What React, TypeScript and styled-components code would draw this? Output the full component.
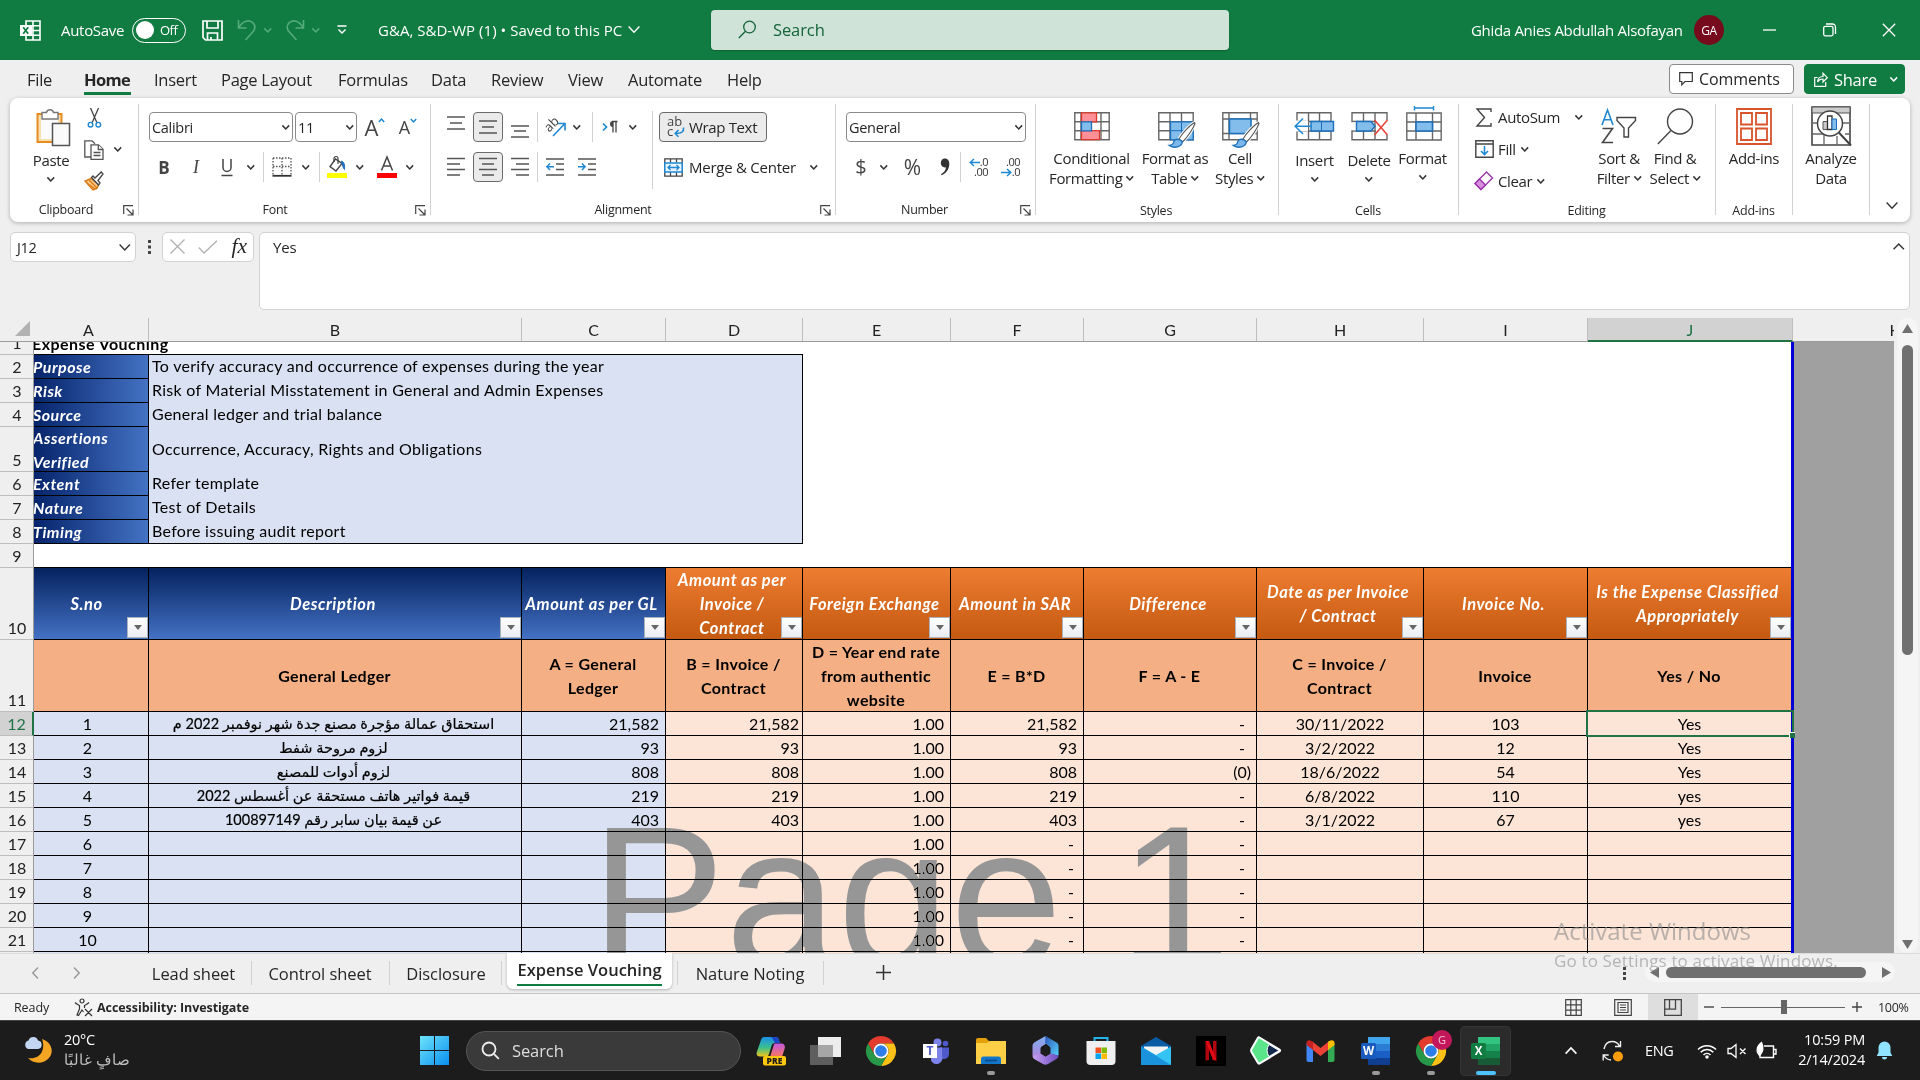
import React from "react";
import styled, { createGlobalStyle, css } from "styled-components";

const UI = `"Open Sans", "Noto Sans", sans-serif`;
const CELL = `Lato, "Noto Sans", "DejaVu Sans", sans-serif`;

const Global = createGlobalStyle`
  *, *::before, *::after { box-sizing: border-box; }
  html, body { margin: 0; padding: 0; background: #efefef; }
  body { width: 1920px; height: 1080px; overflow: hidden; font-family: ${UI}; color: #262626; }
  svg { display: block; flex: none; overflow: visible; }
`;

const Screen = styled.div`
  position: relative;
  display: flex;
  flex-direction: column;
  width: 1920px;
  height: 1080px;
  overflow: hidden;
  background: #efefef;
`;

/* ---------- shared pieces ---------- */

type SlotProps = { $w?: number; $ml?: number; $h?: number; $push?: boolean };

const Slot = styled.div<SlotProps>`
  flex: none;
  display: flex;
  align-items: center;
  justify-content: center;
  width: ${(p) => (p.$w ? `${p.$w}px` : "auto")};
  height: ${(p) => (p.$h ? `${p.$h}px` : "auto")};
  margin-left: ${(p) => (p.$push ? "auto" : `${p.$ml ?? 0}px`)};
  white-space: nowrap;
`;

const Text = styled.span<{ $w?: number; $ml?: number; $size?: number; $ls?: number; $bold?: boolean }>`
  flex: none;
  width: ${(p) => (p.$w ? `${p.$w}px` : "auto")};
  margin-left: ${(p) => p.$ml ?? 0}px;
  font-size: ${(p) => p.$size ?? 15}px;
  letter-spacing: ${(p) => p.$ls ?? -0.35}px;
  font-weight: ${(p) => (p.$bold ? 700 : 400)};
  white-space: nowrap;
`;

const Chevron = ({ size = 7.5, color = "#333", weight = 1.5, up = false }: { size?: number; color?: string; weight?: number; up?: boolean }) => (
  <svg width={size} height={size * 0.6} viewBox="0 0 10 6">
    <path d={up ? "M.5 5.5 5 .8l4.5 4.7" : "M.5.5 5 5.2 9.5.5"} fill="none" stroke={color} strokeWidth={weight * (10 / size)} />
  </svg>
);

const Drop = ({ ml = 0, color }: { ml?: number; color?: string }) => (
  <Slot $w={10} $ml={ml}>
    <Chevron color={color} />
  </Slot>
);

/* ---------- title bar ---------- */

const TitleBar = styled.header`
  flex: none;
  display: flex;
  align-items: center;
  height: 60px;
  background: #107c41;
  color: #fff;
`;

const Toggle = styled.div`
  flex: none;
  display: flex;
  align-items: center;
  gap: 6px;
  width: 54px;
  height: 25px;
  margin-left: 8px;
  padding-left: 3px;
  border: 1px solid #fff;
  border-radius: 13px;
  font-size: 13px;
  letter-spacing: -0.5px;
`;

const Knob = styled.i`
  width: 18px;
  height: 18px;
  border-radius: 50%;
  background: #fff;
`;

const TitleSearch = styled.div`
  flex: none;
  display: flex;
  align-items: center;
  width: 518px;
  height: 40px;
  margin-left: 71px;
  padding: 0 0 2px 27px;
  border-radius: 4px;
  background: #cfe3d8;
  color: #14633a;
  box-shadow: 0 1px 2px rgba(0, 0, 0, 0.2);
`;

const Avatar = styled.div`
  flex: none;
  display: flex;
  align-items: center;
  justify-content: center;
  width: 30px;
  height: 30px;
  margin-left: 11px;
  border-radius: 50%;
  background: #750b1c;
  font-size: 12px;
  letter-spacing: -0.3px;
`;

const ExcelMark = () => (
  <svg width="21" height="21" viewBox="0 0 21 21">
    <path d="M6 1h14v19H6z" fill="none" stroke="#fff" strokeWidth="1.6" />
    <path d="M13 1v19M6 5.7h14M6 10.5h14M6 15.2h14" stroke="#fff" strokeWidth="1.6" />
    <path d="M0 5h12v11H0z" fill="#fff" />
    <path d="M3.2 7.2l5 6.6M8.2 7.2l-5 6.6" stroke="#107c41" strokeWidth="1.8" />
  </svg>
);

const TitleArea = () => (
  <TitleBar>
    <Slot $ml={20}><ExcelMark /></Slot>
    <Text $ml={20} $w={63} $size={15} $ls={-0.3}>AutoSave</Text>
    <Toggle><Knob />Off</Toggle>
    <Slot $ml={16}>
      <svg width="21" height="21" viewBox="0 0 21 21" fill="none" stroke="#fff" strokeWidth="1.7">
        <path d="M1 1h16l3 0v19H3.5L1 17.5z" />
        <path d="M5 1v7h11V1M5.5 20v-7h10v7M9 17v3" />
      </svg>
    </Slot>
    <Slot $ml={14}>
      <svg width="20" height="22" viewBox="0 0 20 22" fill="none" stroke="#55ab7c" strokeWidth="1.6">
        <path d="M1.5 1v8h8M2 8.500C6 1 12 .8 15.500 3.300c3.500 3 3 7-.5 10.500L8.500 21" />
      </svg>
    </Slot>
    <Drop ml={6} color="#55ab7c" />
    <Slot $ml={12}>
      <svg width="20" height="22" viewBox="0 0 20 22" fill="none" stroke="#55ab7c" strokeWidth="1.6">
        <path d="M18.500 1v8h-8M18 8.500C14 1 8 .8 4.500 3.300c-3.500 3-3 7 .5 10.500L11.500 21" />
      </svg>
    </Slot>
    <Drop ml={6} color="#55ab7c" />
    <Slot $ml={16}>
      <svg width="10" height="10" viewBox="0 0 10 10" fill="none" stroke="#fff" strokeWidth="1.4"><path d="M.5 1h9M1.500 4.500 5 8l3.500-3.500" /></svg>
    </Slot>
    <Text $ml={31} $w={246} $size={15} $ls={0.03}>G&amp;A, S&amp;D-WP (1) • Saved to this PC</Text>
    <Slot $ml={4}><Chevron size={12} color="#fff" weight={1.4} /></Slot>
    <TitleSearch>
      <svg width="19" height="19" viewBox="0 0 19 19" fill="none" stroke="#14633a" strokeWidth="1.3"><circle cx="11.500" cy="7" r="5.800" /><path d="M7.500 11.200.8 18" /></svg>
      <Text $ml={16} $size={16.500} $ls={-0.1}>Search</Text>
    </TitleSearch>
    <Text $ml={242} $w={212} $size={15} $ls={-0.32}>Ghida Anies Abdullah Alsofayan</Text>
    <Avatar>GA</Avatar>
    <Slot $ml={38} $w={14}><svg width="13" height="2"><path d="M0 1h13" stroke="#fff" strokeWidth="1.300" /></svg></Slot>
    <Slot $ml={46} $w={14}>
      <svg width="13" height="14" viewBox="0 0 13 14" fill="none" stroke="#fff" strokeWidth="1.300"><rect x=".7" y="3.300" width="9.300" height="9.500" rx="1.500" /><path d="M3 1h6.500a3 3 0 0 1 3 3v7" /></svg>
    </Slot>
    <Slot $ml={46} $w={14}>
      <svg width="14" height="14" viewBox="0 0 14 14" stroke="#fff" strokeWidth="1.300"><path d="M.8.8l12.400 12.400M13.200.8.8 13.200" /></svg>
    </Slot>
  </TitleBar>
);

/* ---------- ribbon tabs ---------- */

const TabRow = styled.nav`
  flex: none;
  display: flex;
  align-items: flex-start;
  height: 38px;
  padding-left: 27px;
`;

const RibbonTab = styled.div<{ $w: number; $ml?: number; $active?: boolean }>`
  flex: none;
  width: ${(p) => p.$w}px;
  height: 35px;
  margin-left: ${(p) => p.$ml ?? 24}px;
  line-height: 40px;
  font-size: 16.5px;
  letter-spacing: -0.25px;
  white-space: nowrap;
  ${(p) =>
    p.$active &&
    css`
      font-weight: 700;
      border-bottom: 3px solid #107c41;
      letter-spacing: -0.7px;
    `}
`;

const TopButton = styled.div<{ $w: number; $ml: number | string; $mr?: number; $green?: boolean }>`
  flex: none;
  display: flex;
  align-items: center;
  width: ${(p) => p.$w}px;
  height: 30px;
  margin-top: 4px;
  margin-left: ${(p) => (typeof p.$ml === "number" ? `${p.$ml}px` : p.$ml)};
  margin-right: ${(p) => p.$mr ?? 0}px;
  padding-left: 9px;
  border-radius: 4px;
  border: 1px solid ${(p) => (p.$green ? "#107c41" : "#8a8a8a")};
  background: ${(p) => (p.$green ? "#107c41" : "#fff")};
  color: ${(p) => (p.$green ? "#fff" : "#262626")};
`;

const tabs: [string, number, number][] = [
  ["Insert", 43, 23],
  ["Page Layout", 93, 24],
  ["Formulas", 69, 24],
  ["Data", 36, 24],
  ["Review", 52, 24],
  ["View", 36, 25],
  ["Automate", 76, 24],
  ["Help", 35, 23],
];

const Tabs = () => (
  <TabRow>
    <RibbonTab $w={25} $ml={0}>File</RibbonTab>
    <RibbonTab $w={47} $ml={32} $active>Home</RibbonTab>
    {tabs.map(([t, w, ml]) => (
      <RibbonTab key={t} $w={w} $ml={ml}>{t}</RibbonTab>
    ))}
    <TopButton $w={125} $ml="auto">
      <svg width="14" height="14" viewBox="0 0 14 14" fill="none" stroke="#333" strokeWidth="1.200"><path d="M.7.7h12.600v8.800H6L2.800 12.800V9.500H.7z" /></svg>
      <Text $ml={6} $size={16} $ls={-0.1}>Comments</Text>
    </TopButton>
    <TopButton $w={101} $ml={10} $mr={15} $green>
      <svg width="14" height="15" viewBox="0 0 14 15" fill="none" stroke="#fff" strokeWidth="1.200"><path d="M3.500 5.500H.7v8.800h11V10M3.500 10c.3-4 2.500-5.500 5.500-5.500V1.200l4.300 4.500L9 10V7c-2.500 0-4.200.8-5.500 3z" /></svg>
      <Text $ml={6} $w={43} $size={16.500} $ls={-0.3}>Share</Text>
      <Drop ml={12} color="#fff" />
    </TopButton>
  </TabRow>
);

/* ---------- ribbon ---------- */

const RibbonCard = styled.section`
  flex: none;
  display: flex;
  height: 124px;
  margin: 0 10px;
  padding: 6px 0 7px;
  border-radius: 8px;
  background: #fff;
  box-shadow: 0 1px 4px rgba(0, 0, 0, 0.28);
`;

const GroupBox = styled.div<{ $w: number }>`
  flex: none;
  display: flex;
  flex-direction: column;
  width: ${(p) => p.$w}px;
  height: 111px;
  border-right: 1px solid #d1d1d1;
`;

const GroupBody = styled.div<{ $pt?: number }>`
  flex: 1;
  display: flex;
  min-height: 0;
  padding-top: ${(p) => p.$pt ?? 0}px;
`;

const GroupFoot = styled.div<{ $low: boolean }>`
  flex: none;
  display: flex;
  align-items: center;
  height: 14px;
  margin-bottom: ${(p) => (p.$low ? -3 : -2)}px;
  font-size: 12.5px;
  letter-spacing: -0.25px;
`;

const FootLabel = styled.span<{ $shift: number }>`
  flex: 1;
  padding: 0 ${(p) => p.$shift}px 2px 0;
  text-align: center;
`;

const Group = ({ w, label, launcher, pt, shift = 1, children }: { w: number; label: string; launcher?: boolean; pt?: number; shift?: number; children: React.ReactNode }) => (
  <GroupBox $w={w}>
    <GroupBody $pt={pt}>{children}</GroupBody>
    <GroupFoot $low={!launcher}>
      <FootLabel $shift={shift}>{label}</FootLabel>
      {launcher && (
        <svg width="15" height="11" viewBox="0 0 15 11" fill="none" stroke="#444" strokeWidth="1.200"><path d="M.7 9V.7H10M3.500 3.500l6 6M10 4.500V10H4.500" /></svg>
      )}
    </GroupFoot>
  </GroupBox>
);

const Column = styled.div<{ $w?: number; $gap?: number; $mt?: number }>`
  flex: none;
  display: flex;
  flex-direction: column;
  gap: ${(p) => p.$gap ?? 0}px;
  width: ${(p) => (p.$w ? `${p.$w}px` : "auto")};
  margin-top: ${(p) => p.$mt ?? 0}px;
`;

const Row = styled.div<{ $h?: number }>`
  flex: none;
  display: flex;
  align-items: center;
  height: ${(p) => p.$h ?? 30}px;
`;

const Sep = styled.i<{ $ml?: number; $h?: number; $mt?: number }>`
  flex: none;
  width: 1px;
  height: ${(p) => p.$h ?? 30}px;
  margin-top: ${(p) => p.$mt ?? 0}px;
  margin-left: ${(p) => p.$ml ?? 0}px;
  background: #d1d1d1;
`;

const Combo = styled.div<{ $w: number; $ml: number }>`
  flex: none;
  display: flex;
  align-items: center;
  justify-content: space-between;
  width: ${(p) => p.$w}px;
  height: 30px;
  margin-left: ${(p) => p.$ml}px;
  padding: 0 3px 0 2px;
  border: 1px solid #8a8a8a;
  border-radius: 4px;
  font-size: 14.5px;
  letter-spacing: -0.3px;
`;

const Pressed = styled.div<{ $w: number; $ml: number }>`
  flex: none;
  display: flex;
  align-items: center;
  justify-content: ${(p) => (p.$w > 40 ? "flex-start" : "center")};
  padding-left: ${(p) => (p.$w > 40 ? 7 : 0)}px;
  width: ${(p) => p.$w}px;
  height: 30px;
  margin-left: ${(p) => p.$ml}px;
  border: 1px solid #6b6b6b;
  border-radius: 4px;
  background: #ebebeb;
`;

const Glyph = styled.span<{ $size: number; $serif?: boolean; $bold?: boolean; $italic?: boolean; $color?: string }>`
  font-family: ${(p) => (p.$serif ? `"Liberation Serif", serif` : UI)};
  font-size: ${(p) => p.$size}px;
  line-height: 1;
  font-weight: ${(p) => (p.$bold ? 700 : 400)};
  font-style: ${(p) => (p.$italic ? "italic" : "normal")};
  color: ${(p) => p.$color ?? "#444"};
`;

const Lines = ({ ys, xs }: { ys: number[]; xs: [number, number][] }) => (
  <svg width="18" height="28" viewBox="0 0 18 28" stroke="#555" strokeWidth="1.500">
    {ys.map((y, i) => (
      <path key={y} d={`M${xs[i % xs.length][0]} ${y}H${xs[i % xs.length][1]}`} />
    ))}
  </svg>
);

const Big = styled.div<{ $w: number; $ml?: number }>`
  flex: none;
  display: flex;
  flex-direction: column;
  align-items: center;
  width: ${(p) => p.$w}px;
  margin-left: ${(p) => p.$ml ?? 0}px;
`;

const BigIcon = styled.div<{ $pt: number; $h?: number; $pl?: number }>`
  height: ${(p) => p.$h ?? 44}px;
  padding-top: ${(p) => p.$pt}px;
  padding-left: ${(p) => p.$pl ?? 0}px;
`;

const BigLine = styled.div<{ $h?: number }>`
  display: flex;
  align-items: center;
  gap: 4px;
  height: ${(p) => p.$h ?? 20}px;
  font-size: 15px;
  letter-spacing: -0.35px;
  white-space: nowrap;
`;

const BigButton = ({ w, ml, icon, pt = 8, pl, lines, drop, shift = 0 }: { w: number; ml?: number; icon: React.ReactNode; pt?: number; pl?: number; lines: string[]; drop?: boolean; shift?: number }) => (
  <Big $w={w} $ml={ml}>
    <BigIcon $pt={pt} $pl={pl} $h={44 + shift}>{icon}</BigIcon>
    {lines.map((l, i) => (
      <BigLine key={l}>
        {l}
        {drop && lines.length > 1 && i === lines.length - 1 && <Chevron />}
      </BigLine>
    ))}
    {drop && lines.length === 1 && <BigLine $h={18}><Chevron /></BigLine>}
  </Big>
);

const Brush = ({ x, y }: { x: number; y: number }) => (
  <g transform={`translate(${x} ${y})`}>
    <path d="M26.500.5C22 3 14 11.500 11 17l3.500 3C19 16 25 7 27 1.500z" fill="#fff" stroke="#fff" strokeWidth="3" />
    <path d="M26.500.5C22 3 14 11.500 11 17l3.500 3C19 16 25 7 27 1.500z" fill="#fff" stroke="#555" strokeWidth="1.100" />
    <path d="M11 17.500c-3-.8-5 .5-5.500 3-.3 1.800-1.500 2.500-4.500 2.800 3 2.500 8 2.500 11 .5 2-1.500 2.500-3 2-4.500z" fill="#7db7ea" stroke="#1b6fbd" strokeWidth="1.300" />
  </g>
);

const PasteIcon = () => (
  <svg width="36" height="39" viewBox="0 0 36 39" fill="none">
    <path d="M1.500 6h24v28h-24z" fill="#fadfae" stroke="#e58b1f" strokeWidth="2" />
    <path d="M5 9h17v22H5z" fill="#fafafa" />
    <path d="M6 4.500h4.500a3.600 3.600 0 0 1 7 0H22v6.500H6z" fill="#fff" stroke="#777" strokeWidth="1.400" />
    <path d="M16.500 15.500h17v22h-17z" fill="#fafafa" stroke="#555" strokeWidth="1.500" />
  </svg>
);

const ClipboardGroup = () => (
  <Group w={129} label="Clipboard" launcher>
    <Big $w={50} $ml={16}>
      <BigIcon $pt={4} $h={46} $pl={5}><PasteIcon /></BigIcon>
      <BigLine>Paste</BigLine>
      <BigLine $h={18}><Chevron /></BigLine>
    </Big>
    <Column $w={54} $mt={-2}>
      <Row $h={32}>
        <Slot $ml={9} $w={18}>
          <svg width="15" height="20" viewBox="0 0 15 20" fill="none"><path d="M3.500 0l6.300 14.500M11.500 0 5.200 14.500" stroke="#444" strokeWidth="1.300" /><circle cx="3.500" cy="16.700" r="2.300" stroke="#1e88d2" strokeWidth="1.400" /><circle cx="11.300" cy="16.700" r="2.300" stroke="#1e88d2" strokeWidth="1.400" /></svg>
        </Slot>
      </Row>
      <Row $h={31}>
        <Slot $ml={8} $w={20}>
          <svg width="20" height="20" viewBox="0 0 20 20" fill="#fff" stroke="#555" strokeWidth="1.300"><path d="M7 17H.8V.8H8l3 3" /><path d="M7 4.800h7.500l4.500 4.500v10H7z" /><path d="M14.300 5v4.500H19M9.500 12.500h7M9.500 15.500h7" /></svg>
        </Slot>
        <Drop ml={9} />
      </Row>
      <Row $h={32}>
        <Slot $ml={8} $w={20}>
          <svg width="20" height="20" viewBox="0 0 20 20" fill="none"><path d="M1 10l8 9 4-1.500 1.500-4L7 7.500z" fill="#f8c98a" stroke="#dd7a12" strokeWidth="1.400" /><path d="M3 12l8 6M5 9l8 8" stroke="#dd7a12" strokeWidth="1.200" /><path d="M7.500 6.500l7 7.500 1.500-2-2-2.500 5-6.500-1.800-2L11 7 9 5z" fill="#fff" stroke="#444" strokeWidth="1.300" /></svg>
        </Slot>
      </Row>
    </Column>
  </Group>
);

const FontGroup = () => (
  <Group w={292} label="Font" launcher pt={8} shift={4}>
    <Column $gap={10}>
      <Row>
        <Combo $ml={10} $w={144}>Calibri<Chevron /></Combo>
        <Combo $ml={2} $w={62}>11<Chevron /></Combo>
        <Slot $ml={7} $w={22}>
          <Glyph $size={22}>A</Glyph>
          <svg width="7" height="20" viewBox="0 0 7 20" fill="none" stroke="#1e88d2" strokeWidth="1.500"><path d="M.8 5 3.500 2l2.700 3" /></svg>
        </Slot>
        <Slot $ml={12} $w={20}>
          <Glyph $size={18}>A</Glyph>
          <svg width="7" height="20" viewBox="0 0 7 20" fill="none" stroke="#1e88d2" strokeWidth="1.500"><path d="M.8 2 3.500 5l2.700-3" /></svg>
        </Slot>
      </Row>
      <Row>
        <Slot $ml={17} $w={16}><Glyph $size={17} $bold>B</Glyph></Slot>
        <Slot $ml={16} $w={16}><Glyph $size={18} $serif $italic>I</Glyph></Slot>
        <Slot $ml={15} $w={16}>
          <svg width="12" height="19" viewBox="0 0 12 19" fill="none" stroke="#444" strokeWidth="1.500"><path d="M2 1v8.500a4 4 0 0 0 8 0V1M.5 17.500h11" /></svg>
        </Slot>
        <Drop ml={11} />
        <Sep $ml={7} />
        <Slot $ml={8} $w={20}>
          <svg width="20" height="20" viewBox="0 0 20 20" fill="none" stroke="#555" strokeWidth="1.300"><path d="M1 1h18v17M1 1v17M10 1v17M1 9.500h18" strokeDasharray="1.500 1.500" /><path d="M.5 18.800h19" stroke="#333" strokeWidth="1.800" /></svg>
        </Slot>
        <Drop ml={9} />
        <Sep $ml={8} />
        <Slot $ml={7} $w={20}>
          <svg width="20" height="22" viewBox="0 0 20 22" fill="none"><path d="M8.500 3 3 10.500l6 4.500 6-7.500z" stroke="#444" strokeWidth="1.400" /><path d="M7 6V2.500a2 2 0 0 1 4 0V8" stroke="#444" strokeWidth="1.200" /><path d="M14.500 5c2.500 1 3.500 3.500 3 8.500-1.500-1.500-2-4-3-8.500z" fill="#1e6fbf" stroke="#1e6fbf" /><path d="M0 17h20v5H0z" fill="#ff0" /></svg>
        </Slot>
        <Drop ml={8} />
        <Slot $ml={12} $w={20}>
          <svg width="20" height="22" viewBox="0 0 20 22" fill="none"><path d="M4.500 14.500 10 1l5.500 13.500M6.300 10h7.400" stroke="#444" strokeWidth="1.500" /><path d="M0 17h20v5H0z" fill="red" /></svg>
        </Slot>
        <Drop ml={8} />
      </Row>
    </Column>
  </Group>
);

const AlignmentGroup = () => (
  <Group w={405} label="Alignment" launcher pt={8} shift={5}>
    <Column $gap={10} $w={221}>
      <Row>
        <Slot $ml={16}><Lines ys={[4, 10, 16]} xs={[[0, 18], [3, 15], [0, 18]]} /></Slot>
        <Pressed $ml={8} $w={30}><Lines ys={[8, 14, 20]} xs={[[0, 18], [3, 15], [0, 18]]} /></Pressed>
        <Slot $ml={8}><Lines ys={[13, 18, 24]} xs={[[0, 18], [3, 15], [0, 18]]} /></Slot>
        <Sep $ml={8} />
        <Slot $ml={8} $w={20}>
          <svg width="20" height="20" viewBox="0 0 20 20" fill="none">
            <text x="0" y="12" fontFamily="Open Sans" fontSize="13" fill="#444" transform="rotate(-45 6 10)">ab</text>
            <path d="M7 19 18.500 7M12 6.500h7v7" stroke="#1e88d2" strokeWidth="1.600" />
          </svg>
        </Slot>
        <Drop ml={6} />
        <Sep $ml={10} />
        <Slot $ml={9} $w={16}>
          <svg width="16" height="14" viewBox="0 0 16 14" fill="none"><path d="M1 3.500 4.500 7 1 10.500" stroke="#1e88d2" strokeWidth="1.700" /><path d="M11 1.500v11M14 1.500v11M10 1.500h5.500" stroke="#444" strokeWidth="1.300" /><path d="M11 1a3 3 0 0 0 0 6z" fill="#444" /></svg>
        </Slot>
        <Drop ml={10} />
      </Row>
      <Row>
        <Slot $ml={16}><Lines ys={[5.500, 11, 16.500, 22]} xs={[[0, 18], [0, 13]]} /></Slot>
        <Pressed $ml={8} $w={30}><Lines ys={[5.500, 11, 16.500, 22]} xs={[[0, 18], [3, 15]]} /></Pressed>
        <Slot $ml={8}><Lines ys={[5.500, 11, 16.500, 22]} xs={[[0, 18], [5, 18]]} /></Slot>
        <Sep $ml={8} />
        <Slot $ml={8}>
          <svg width="18" height="18" viewBox="0 0 18 18" fill="none"><path d="M0 1h18M10 6h8M10 11.500h8M0 17h18" stroke="#555" strokeWidth="1.500" /><path d="M8 8.800H1M4 5.500.9 8.800 4 12" stroke="#1e88d2" strokeWidth="1.500" /></svg>
        </Slot>
        <Slot $ml={14}>
          <svg width="18" height="18" viewBox="0 0 18 18" fill="none"><path d="M0 1h18M10 6h8M10 11.500h8M0 17h18" stroke="#555" strokeWidth="1.500" /><path d="M0 8.800h7M4 5.500l3.100 3.300L4 12" stroke="#1e88d2" strokeWidth="1.500" /></svg>
        </Slot>
      </Row>
    </Column>
    <Sep $h={78} $mt={-1} />
    <Column $gap={10}>
      <Row>
        <Pressed $ml={6} $w={108}>
          <svg width="18" height="21" viewBox="0 0 18 21" fill="none">
            <text x="0" y="9" fontFamily="Open Sans" fontSize="13" fill="#444">ab</text>
            <text x="0" y="19" fontFamily="Open Sans" fontSize="13" fill="#444">c</text>
            <path d="M16.500 10.500c.5 4-1.500 6-8 6M11.500 13l-3.300 3.500 3.300 3.300" stroke="#1e88d2" strokeWidth="1.600" />
          </svg>
          <Text $ml={4} $ls={-0.35}>Wrap Text</Text>
        </Pressed>
      </Row>
      <Row>
        <Slot $ml={10} $w={20}>
          <svg width="19" height="19" viewBox="0 0 19 19" fill="none"><path d="M.8.8h17.400v17.400H.8zM6.500.8v4M12.500.8v4M6.500 14v4M12.500 14v4" stroke="#444" strokeWidth="1.300" /><path d="M.8 5h17.400v9H.8z" fill="#eaf4fd" stroke="#1e88d2" strokeWidth="1.500" /><path d="M4 9.500h11M6.500 7 4 9.500 6.500 12M12.500 7 15 9.500 12.500 12" stroke="#1e88d2" strokeWidth="1.300" /></svg>
        </Slot>
        <Text $ml={6} $w={106} $ls={-0.25}>Merge &amp; Center</Text>
        <Drop ml={14} />
      </Row>
    </Column>
  </Group>
);

const DecimalText = styled.div`
  display: flex;
  flex-direction: column;
  width: 20px;
  font-size: 11px;
  line-height: 10px;
  letter-spacing: -0.5px;
  color: #333;
`;

const DecimalLine = styled.span`
  display: flex;
  align-items: center;
  justify-content: flex-end;
`;

const Arrow = ({ left }: { left?: boolean }) => (
  <svg width="11" height="9" viewBox="0 0 11 9" fill="none" stroke="#1e88d2" strokeWidth="1.500"><path d={left ? "M11 4.500H1.500M5 1 1.300 4.500 5 8" : "M0 4.500h9.500M6 1l3.700 3.500L6 8"} /></svg>
);

const NumberGroup = () => (
  <Group w={200} label="Number" launcher pt={8} shift={7}>
    <Column $gap={10}>
      <Row><Combo $ml={10} $w={180}>General<Chevron /></Combo></Row>
      <Row>
        <Slot $ml={19} $w={12}><Glyph $size={20}>$</Glyph></Slot>
        <Drop ml={12} />
        <Slot $ml={14} $w={19}><Glyph $size={21}>%</Glyph></Slot>
        <Slot $ml={18} $w={10}>
          <svg width="10" height="18" viewBox="0 0 10 18"><path d="M4.800.5C8 .5 9.500 3 9.300 6.500 9 11.500 6 15.500 1.500 17.200l-.5-1c3-1.700 4.800-4 5-7C3.500 10 .8 8 .8 5 .8 2.300 2.500.5 4.800.5z" fill="#333" /></svg>
        </Slot>
        <Sep $ml={10} />
        <Slot $ml={7} $w={20}>
          <DecimalText><DecimalLine><Arrow left />.0</DecimalLine><DecimalLine>.00</DecimalLine></DecimalText>
        </Slot>
        <Slot $ml={12} $w={20}>
          <DecimalText><DecimalLine>.00</DecimalLine><DecimalLine><Arrow />.0</DecimalLine></DecimalText>
        </Slot>
      </Row>
    </Column>
  </Group>
);

const CondIcon = () => (
  <svg width="36" height="29" viewBox="0 0 36 29" fill="none"><path d="M.8.800h34.400v27H.8zM.8 9.700h34.400M.8 18.700h34.400M7 .8v27M27 .8v27" stroke="#666" strokeWidth="1.400" /><path d="M7.500.8h15v9h-15zM7.500 18.700h18v9h-18z" fill="#ff9097" stroke="#d93a2b" strokeWidth="1.300" /><path d="M7.500 9.800h10v9h-10z" fill="#83bdeb" stroke="#1b6fbd" strokeWidth="1.300" /></svg>
);

const TableIcon = () => (
  <svg width="36" height="35" viewBox="0 0 36 35" fill="none"><path d="M.8.800h34.400v27H.8zM.8 9.700h34.400M.8 18.700h34.400M12 .8v27M23.500 .8v27" stroke="#666" strokeWidth="1.400" /><path d="M12.500 9.800h22.700v18H12.500z" fill="#83bdeb" stroke="#1b6fbd" strokeWidth="1.300" /><path d="M12.500 18.700h22M23.500 10v18" stroke="#1b6fbd" /><Brush x={10} y={10} /></svg>
);

const StyleIcon = () => (
  <svg width="36" height="35" viewBox="0 0 36 35" fill="none"><path d="M.8.800h34.400v27H.8zM.8 7h34.400M.8 21.500h34.400M7 .8v27M28.500 .8v27" stroke="#666" strokeWidth="1.400" /><path d="M7.500 7h21.500v14.500H7.500z" fill="#83bdeb" stroke="#1b6fbd" strokeWidth="1.500" /><Brush x={10} y={10} /></svg>
);

const InsertIcon = () => (
  <svg width="41" height="29" viewBox="0 0 41 29" fill="none"><path d="M3 .8h34v27H3zM14.500.8v27M25.500.8v27M3 9.500h34M3 19h34" stroke="#666" strokeWidth="1.400" /><path d="M0 8.500h14v11H0z" fill="#fff" /><path d="M17 9.500h22.500v9.500H17z" fill="#83bdeb" stroke="#1b6fbd" strokeWidth="1.400" /><path d="M27.500 9.500V19" stroke="#1b6fbd" /><path d="M18 14.200H1.500M9 6.500 1.200 14.200 9 22" stroke="#1e88d2" strokeWidth="1.500" /></svg>
);

const DeleteIcon = () => (
  <svg width="38" height="29" viewBox="0 0 38 29" fill="none"><path d="M1 .8h35v27H1zM12.500.8v27M24 .8v27M1 9.500h35M1 19h35" stroke="#666" strokeWidth="1.400" /><path d="M0 10.200h6v8H0zM25 8h13v15H25z" fill="#fff" /><path d="M5.500 9.500H20l4 4.700-4 4.800H5.500z" fill="#83bdeb" stroke="#1b6fbd" strokeWidth="1.400" /><path d="M23.500 8 36.500 23M36.500 8l-13 15" stroke="#e5433c" strokeWidth="1.600" /></svg>
);

const FormatIcon = () => (
  <svg width="36" height="35" viewBox="0 0 36 35" fill="none"><path d="M.8 7h34.400v27H.8zM10 7v27M26.500 7v27M.8 16h34.400M.8 25h34.400" stroke="#666" strokeWidth="1.400" /><path d="M10 16h16.500v9H10z" fill="#83bdeb" stroke="#1b6fbd" strokeWidth="1.500" /><path d="M8.500 2h19M8.500 0v4.500M27.500 0v4.500" stroke="#1e88d2" strokeWidth="1.400" /></svg>
);

const SortIcon = () => (
  <svg width="36" height="36" viewBox="0 0 36 36" fill="none"><path d="M1 17 6.500 2 12 17M3 11.800h7" stroke="#1e88d2" strokeWidth="1.600" /><path d="M1.500 20.500h10L1.500 34.500h10.500" stroke="#444" strokeWidth="1.600" /><path d="M16 9.500h18.500v3L27.500 20v9h-4.500v-9L16 12.500z" fill="#fff" stroke="#444" strokeWidth="1.400" /></svg>
);

const FindIcon = () => (
  <svg width="37" height="37" viewBox="0 0 37 37" fill="none" stroke="#444" strokeWidth="1.400"><circle cx="23" cy="13.500" r="12.500" /><path d="M14 22.500.8 36" /></svg>
);

const AddinIcon = () => (
  <svg width="36" height="37" viewBox="0 0 36 37" fill="none" stroke="#d9532c" strokeWidth="1.800"><path d="M1 1h34v35H1z" /><path d="M5 5h11v11.500H5zM20 5h11v11.500H20zM5 20.500h11V32H5zM20 20.500h11V32H20z" /></svg>
);

const AnalyzeIcon = () => (
  <svg width="41" height="41" viewBox="0 0 41 41" fill="none"><path d="M1 1h38v38H1z" fill="#fff" stroke="#444" strokeWidth="1.600" /><path d="M1 1h38v6H1z" fill="#ccc" stroke="#555" /><path d="M1 17h8M1 28h12M13 28v11M26 30v9M31 17h8M34 28h5" stroke="#666" strokeWidth="1.300" /><circle cx="19" cy="17.500" r="12.500" fill="#fff" stroke="#444" strokeWidth="1.500" /><path d="M12 15.500h4.500v8H12z" fill="#c8c8c8" stroke="#555" /><path d="M16.500 10h4.500v13.500h-4.500z" fill="#fff" stroke="#333" strokeWidth="1.300" /><path d="M21 13h4.500v10.500H21z" fill="#83bdeb" stroke="#1b6fbd" /><path d="M27.800 26.500 40 39.500" stroke="#444" strokeWidth="2" /></svg>
);

const RibbonTail = styled.div`
  flex: 1;
  display: flex;
  align-items: flex-end;
  justify-content: center;
  padding: 0 0 6px 3px;
`;

const Ribbon = () => (
  <RibbonCard>
    <ClipboardGroup />
    <FontGroup />
    <AlignmentGroup />
    <NumberGroup />
    <Group w={243} label="Styles" shift={2}>
      <BigButton w={97} ml={7} pl={1} icon={<CondIcon />} lines={["Conditional", "Formatting"]} drop />
      <BigButton w={70} pl={1} icon={<TableIcon />} lines={["Format as", "Table"]} drop />
      <BigButton w={60} icon={<StyleIcon />} lines={["Cell", "Styles"]} drop />
    </Group>
    <Group w={180} label="Cells">
      <BigButton w={55} ml={8} icon={<InsertIcon />} lines={["Insert"]} drop shift={2} />
      <BigButton w={54} pl={2} icon={<DeleteIcon />} lines={["Delete"]} drop shift={2} />
      <BigButton w={53} pl={2} icon={<FormatIcon />} pt={2} lines={["Format"]} drop />
    </Group>
    <Group w={257} label="Editing">
      <Column $w={133} $mt={-3}>
        <Row $h={32}>
          <Slot $ml={17} $w={16}><svg width="16" height="19" viewBox="0 0 16 19" fill="none" stroke="#444" strokeWidth="1.400"><path d="M15 4V1H1l7.500 8.500L1 18h14v-3" /></svg></Slot>
          <Text $ml={6} $w={61}>AutoSum</Text>
          <Drop ml={15} />
        </Row>
        <Row $h={32}>
          <Slot $ml={15} $w={20}><svg width="19" height="18" viewBox="0 0 19 18" fill="none"><path d="M.8.800h17.400v16.400H.8zM.8 4h17.400" stroke="#444" strokeWidth="1.400" /><path d="M9.500 6v8.500M6 11l3.500 3.500L13 11" stroke="#1e88d2" strokeWidth="1.600" /></svg></Slot>
          <Text $ml={4}>Fill</Text>
          <Drop ml={4} />
        </Row>
        <Row $h={32}>
          <Slot $ml={15} $w={20}><svg width="20" height="20" viewBox="0 0 20 20" fill="none"><path d="M1 12.500 12.500 1l6 6L7 18.500z" fill="#fff" stroke="#9a35a8" strokeWidth="1.400" /><path d="M1 12.500 5.500 8l6 6L7 18.500z" fill="#d58fdc" stroke="#9a35a8" strokeWidth="1.400" /></svg></Slot>
          <Text $ml={4}>Clear</Text>
          <Drop ml={3} />
        </Row>
      </Column>
      <BigButton w={54} icon={<SortIcon />} pt={4} lines={["Sort &", "Filter"]} drop />
      <BigButton w={58} icon={<FindIcon />} pt={4} lines={["Find &", "Select"]} drop />
    </Group>
    <Group w={77} label="Add-ins">
      <BigButton w={76} icon={<AddinIcon />} pt={4} lines={["Add-ins"]} />
    </Group>
    <Group w={77} label="">
      <BigButton w={76} icon={<AnalyzeIcon />} pt={2} lines={["Analyze", "Data"]} />
    </Group>
    <RibbonTail><Chevron size={12} weight={1.400} /></RibbonTail>
  </RibbonCard>
);

/* ---------- formula bar ---------- */

const FormulaRow = styled.div`
  flex: none;
  display: flex;
  align-items: flex-start;
  height: 96px;
  padding: 10px 10px 0;
`;

const Field = styled.div<{ $w?: number; $h?: number; $ml?: number; $pad: string; $top?: boolean }>`
  flex: ${(p) => (p.$w ? "none" : "1")};
  display: flex;
  align-items: ${(p) => (p.$top ? "flex-start" : "center")};
  justify-content: space-between;
  width: ${(p) => (p.$w ? `${p.$w}px` : "auto")};
  height: ${(p) => p.$h ?? 30}px;
  margin-left: ${(p) => p.$ml ?? 0}px;
  padding: ${(p) => p.$pad};
  border: 1px solid #d2d2d2;
  border-radius: 5px;
  background: #fff;
`;

const FormulaBar = () => (
  <FormulaRow>
    <Field $w={126} $pad="0 5px 0 6px">
      <Text $size={14.500}>J12</Text>
      <Chevron size={11.5} weight={1.400} />
    </Field>
    <Slot $ml={11} $w={4} $h={30}>
      <svg width="3" height="14" fill="#444"><path d="M0 0h3v3H0zM0 5.500h3v3H0zM0 11h3v3H0z" /></svg>
    </Slot>
    <Field $w={92} $ml={11} $pad="0 6px 1px 7px">
      <svg width="15" height="15" viewBox="0 0 15 15" stroke="#b0b0b0" strokeWidth="1.300"><path d="M.5.5l14 14M14.500.5l-14 14" /></svg>
      <svg width="20" height="14" viewBox="0 0 20 14" fill="none" stroke="#b0b0b0" strokeWidth="1.300"><path d="M.8 7.500 6 13 19 .8" /></svg>
      <Glyph $size={21.5} $serif $italic $color="#262626">fx</Glyph>
    </Field>
    <Field $h={78} $ml={5} $top $pad="4px 5px 0 13px">
      <Text $size={15} $ls={-0.100}>Yes</Text>
      <Slot $h={18}><Chevron size={11.5} up weight={1.400} /></Slot>
    </Field>
  </FormulaRow>
);

/* ---------- worksheet ---------- */

const COLS = "34px 115px 373px 144px 137px 148px 133px 173px 167px 164px 203px";
const HEAD_COLS = "34px 115px 373px 144px 137px 148px 133px 173px 167px 164px 205px 101px";

const Workspace = styled.main`
  position: relative;
  flex: none;
  display: flex;
  height: 635px;
  overflow: hidden;
`;

const SheetPane = styled.div`
  flex: none;
  display: flex;
  flex-direction: column;
  width: 1894px;
  overflow: hidden;
`;

const HeaderRow = styled.div`
  flex: none;
  display: grid;
  grid-template-columns: ${HEAD_COLS};
  grid-template-rows: 100%;
  height: 24px;
  border-bottom: 1px solid #9b9b9b;
  font-family: ${CELL};
  font-size: 16px;
`;

const ColHead = styled.div<{ $sel?: boolean; $edge?: boolean; $pr?: number }>`
  display: flex;
  align-items: center;
  justify-content: center;
  padding-right: ${(p) => p.$pr ?? 0}px;
  color: #222;
  border-right: 1px solid #bdbdbd;
  ${(p) =>
    p.$sel &&
    css`
      height: 24px;
      background: #d2d2d2;
      color: #217346;
      border-bottom: 2px solid #217346;
    `}
  ${(p) =>
    p.$edge &&
    css`
      justify-content: flex-end;
      border-right: 0;
      overflow: hidden;
    `}
`;

const EdgeLetter = styled.span`
  margin-right: -6px;
`;

const Corner = styled.div`
  display: flex;
  align-items: center;
  justify-content: flex-end;
  padding: 0 4px 3px 0;
`;

const SheetBody = styled.div`
  position: relative;
  flex: 1;
  display: flex;
  min-height: 0;
  background: #a0a0a0;
  overflow: hidden;
`;

const Page = styled.div`
  flex: none;
  width: 1791px;
`;

const PageBreak = styled.i`
  flex: none;
  width: 3px;
  background: #0000d4;
`;

const SheetRow = styled.div<{ $h: number }>`
  display: grid;
  grid-template-columns: ${COLS};
  grid-template-rows: 100%;
  height: ${(p) => p.$h}px;
  background: #fff;
  font-family: ${CELL};
  font-size: 16px;
  line-height: 24px;
  font-variant-ligatures: none;
  color: #000;
`;

const RowHead = styled.div<{ $sel?: boolean }>`
  display: flex;
  align-items: flex-end;
  justify-content: center;
  min-height: 0;
  padding-left: 1px;
  background: ${(p) => (p.$sel ? "#d2d2d2" : "#efefef")};
  color: ${(p) => (p.$sel ? "#217346" : "#222")};
  border-right: ${(p) => (p.$sel ? "2px solid #217346" : "1px solid #9b9b9b")};
  border-bottom: 1px solid #bdbdbd;
`;

const RowNumber = styled.span`
  height: 23px;
`;

const TitleCell = styled.div<{ $wide?: boolean }>`
  grid-column: ${(p) => (p.$wide ? "2 / 12" : "2 / 6")};
  display: flex;
  align-items: flex-end;
  min-width: 0;
  min-height: 0;
  border-bottom: 1px solid #000;
  font-weight: 700;
  letter-spacing: 0.45px;
  overflow: hidden;
`;

const TitleText = styled.span`
  height: 22px;
  margin-left: -2px;
`;

const KeyCell = styled.div`
  display: flex;
  align-items: center;
  min-height: 0;
  letter-spacing: 0.5px;
  background: linear-gradient(90deg, #06246b, #4472c4);
  border-right: 1px solid #000;
  border-bottom: 1px solid #000;
  color: #fff;
  font-weight: 700;
  font-style: italic;
  overflow: hidden;
`;

const KeyText = styled.span`
  white-space: pre-line;
  margin: 1px 0 0 -1px;
`;

const NoteCell = styled.div<{ $last?: boolean }>`
  grid-column: 3 / 6;
  display: flex;
  align-items: center;
  min-height: 0;
  padding: 0 0 ${(p) => (p.$last ? 1 : 2)}px 3px;
  line-height: 20px;
  letter-spacing: 0.29px;
  background: #d9e1f2;
  border-right: 1px solid #000;
  border-bottom: ${(p) => (p.$last ? "1px solid #000" : "0")};
  white-space: nowrap;
`;

type Tone = "navy" | "orange" | "peach" | "blue" | "cream";
const fills: Record<Tone, string> = {
  navy: "linear-gradient(180deg, #05225f, #4472c4)",
  orange: "linear-gradient(180deg, #ed7d31, #c45911)",
  peach: "#f4b084",
  blue: "#d9e1f2",
  cream: "#fce4d6",
};

const Cell = styled.div<{ $tone: Tone; $align?: "center" | "right"; $pr?: number; $last?: boolean }>`
  position: relative;
  display: flex;
  align-items: center;
  justify-content: ${(p) => (p.$align === "right" ? "flex-end" : "center")};
  min-width: 0;
  min-height: 0;
  padding-right: ${(p) => p.$pr ?? 0}px;
  background: ${(p) => fills[p.$tone]};
  border-right: ${(p) => (p.$last ? 0 : 1)}px solid #000;
  border-bottom: 1px solid #000;
  text-align: center;
  white-space: pre;
  ${(p) =>
    (p.$tone === "navy" || p.$tone === "orange") &&
    css`
      padding-top: 1px;
      color: #fff;
      font-weight: 700;
      font-style: italic;
      font-size: 16.5px;
      letter-spacing: 0.53px;
    `}
  ${(p) =>
    p.$tone === "peach" &&
    css`
      font-weight: 700;
      letter-spacing: 0.35px;
    `}
`;

const FilterButton = styled.i`
  position: absolute;
  right: 0;
  bottom: 1px;
  display: flex;
  align-items: center;
  justify-content: center;
  width: 21px;
  height: 21px;
  border: 1px solid #aab2bd;
  background: linear-gradient(#fff, #e9ecf1);
`;

const Selection = styled.i`
  position: absolute;
  inset: -2px -3px -2px -2px;
  border: 2px solid #217346;
  z-index: 2;
  &::after {
    content: "";
    position: absolute;
    right: -3px;
    bottom: -3px;
    width: 6px;
    height: 6px;
    background: #217346;
    border: solid #fff;
    border-width: 1px 0 0 1px;
  }
`;

const PageMark = styled.div`
  position: absolute;
  left: 590.5px;
  top: 439px;
  font-family: "Liberation Sans", Arial, sans-serif;
  font-size: 202px;
  line-height: 232px;
  color: #969696;
  white-space: pre;
  mix-blend-mode: darken;
  pointer-events: none;
`;

const letters = ["A", "B", "C", "D", "E", "F", "G", "H", "I", "J"];

const notes: [number, number, string, string][] = [
  [2, 24, "Purpose", "To verify accuracy and occurrence of expenses during the year"],
  [3, 24, "Risk", "Risk of Material Misstatement in General and Admin Expenses"],
  [4, 24, "Source", "General ledger and trial balance"],
  [5, 45, "Assertions\nVerified", "Occurrence, Accuracy, Rights and Obligations"],
  [6, 24, "Extent", "Refer template"],
  [7, 24, "Nature", "Test of Details"],
  [8, 24, "Timing", "Before issuing audit report"],
];

const heads = [
  "S.no",
  "Description",
  "Amount as per GL",
  "Amount as per\nInvoice /\nContract",
  "Foreign Exchange",
  "Amount in SAR",
  "Difference",
  "Date as per Invoice\n/ Contract",
  "Invoice No.",
  "Is the Expense Classified\nAppropriately",
];

const subs = [
  "",
  "General Ledger",
  "A = General\nLedger",
  "B = Invoice /\nContract",
  "D = Year end rate\nfrom authentic\nwebsite",
  "E = B*D",
  "F = A - E",
  "C = Invoice /\nContract",
  "Invoice",
  "Yes / No",
];

const blank = ["", "", "", "1.00", "-", "-", "", "", ""];
const data: string[][] = [
  ["استحقاق عمالة مؤجرة مصنع جدة شهر نوفمبر 2022 م", "21,582", "21,582", "1.00", "21,582", "-", "30/11/2022", "103", "Yes"],
  ["لزوم مروحة شفط", "93", "93", "1.00", "93", "-", "3/2/2022", "12", "Yes"],
  ["لزوم أدوات للمصنع", "808", "808", "1.00", "808", "(0)", "18/6/2022", "54", "Yes"],
  ["قيمة فواتير هاتف مستحقة عن أغسطس 2022", "219", "219", "1.00", "219", "-", "6/8/2022", "110", "yes"],
  ["عن قيمة بيان سابر رقم 100897149", "403", "403", "1.00", "403", "-", "3/1/2022", "67", "yes"],
  blank,
  blank,
  blank,
  blank,
  blank,
];

const rightPad: Record<number, number> = { 1: 6, 2: 3, 3: 6, 4: 6, 5: 11 };

const padFor = (col: number, value: string) => {
  if (value === "(0)") return 5;
  if (col === 4 && value === "-") return 9;
  return rightPad[col] ?? 0;
};

const Arabic = styled.span`
  direction: rtl;
  padding-right: 3px;
  font-size: 14.5px;
  -webkit-text-stroke: 0.2px #000;
`;

const Worksheet = () => (
  <SheetPane>
    <HeaderRow>
      <Corner><svg width="15" height="15"><path d="M15 0v15H0z" fill="#b2b2b2" /></svg></Corner>
      {letters.map((l) => (
        <ColHead key={l} $sel={l === "J"} $pr={l === "A" ? 5 : 0}>{l}</ColHead>
      ))}
      <ColHead $edge><EdgeLetter>K</EdgeLetter></ColHead>
    </HeaderRow>
    <SheetBody>
      <Page>
        <SheetRow $h={13}>
          <RowHead><RowNumber>1</RowNumber></RowHead>
          <TitleCell><TitleText>Expense Vouching</TitleText></TitleCell>
        </SheetRow>
        {notes.map(([n, h, key, note]) => (
          <SheetRow key={n} $h={h}>
            <RowHead><RowNumber>{n}</RowNumber></RowHead>
            <KeyCell><KeyText>{key}</KeyText></KeyCell>
            <NoteCell $last={n === 8}>{note}</NoteCell>
          </SheetRow>
        ))}
        <SheetRow $h={24}>
          <RowHead><RowNumber>9</RowNumber></RowHead>
          <TitleCell $wide />
        </SheetRow>
        <SheetRow $h={72}>
          <RowHead><RowNumber>10</RowNumber></RowHead>
          {heads.map((h, i) => (
            <Cell key={h} $tone={i < 3 ? "navy" : "orange"} $pr={i === 0 ? 9 : 4} $last={i === 9}>
              {h}
              <FilterButton><svg width="8" height="5"><path d="M0 0h8L4 5z" fill="#666" /></svg></FilterButton>
            </Cell>
          ))}
        </SheetRow>
        <SheetRow $h={72}>
          <RowHead><RowNumber>11</RowNumber></RowHead>
          {subs.map((s, i) => (
            <Cell key={i} $tone="peach" $pr={1} $last={i === 9}>{s}</Cell>
          ))}
        </SheetRow>
        {data.map((r, n) => (
          <SheetRow key={n} $h={24}>
            <RowHead $sel={n === 0}><RowNumber>{n + 12}</RowNumber></RowHead>
            <Cell $tone="blue" $pr={7}>{n + 1}</Cell>
            {r.map((v, i) => (
              <Cell
                key={i}
                $tone={i < 2 ? "blue" : "cream"}
                $align={i >= 1 && i <= 5 ? "right" : "center"}
                $pr={padFor(i, v)}
                $last={i === 8}
              >
                {i === 0 ? <Arabic>{v}</Arabic> : v}
                {n === 0 && i === 8 && <Selection />}
              </Cell>
            ))}
          </SheetRow>
        ))}
        <SheetRow $h={24}>
          <RowHead />
          <Cell $tone="blue" />
          {blank.map((_, i) => (
            <Cell key={i} $tone={i < 2 ? "blue" : "cream"} $last={i === 8} />
          ))}
        </SheetRow>
      </Page>
      <PageBreak />
      <PageMark>Page 1</PageMark>
    </SheetBody>
  </SheetPane>
);

const VScroll = styled.div`
  flex: none;
  display: flex;
  flex-direction: column;
  align-items: center;
  width: 21px;
  height: 635px;
  margin-left: 3px;
  padding: 6px 0 4px;
  border-radius: 10px;
  background: #f5f5f5;
`;

const VThumb = styled.i`
  width: 11px;
  height: 310px;
  margin: 12px 0 auto;
  border-radius: 6px;
  background: #707070;
`;

/* ---------- sheet tabs ---------- */

const SheetTabs = styled.div`
  flex: none;
  display: flex;
  align-items: flex-start;
  height: 41px;
  border-top: 1px solid #dcdcdc;
  border-bottom: 1px solid #c6c6c6;
`;

const SheetTab = styled.div<{ $w: number; $ml: number }>`
  flex: none;
  display: flex;
  justify-content: center;
  width: ${(p) => p.$w}px;
  margin-left: ${(p) => p.$ml}px;
  line-height: 39px;
  font-size: 16.5px;
  letter-spacing: -0.05px;
  white-space: nowrap;
`;

const ActiveTab = styled.div`
  flex: none;
  width: 165px;
  height: 36px;
  margin: -1px 0 0 5px;
  padding: 0 10px;
  border-radius: 0 0 6px 6px;
  background: #fff;
  box-shadow: 0 1px 3px rgba(0, 0, 0, 0.25);
`;

const ActiveLabel = styled.div`
  display: flex;
  justify-content: center;
  height: 33px;
  line-height: 34px;
  border-bottom: 2px solid #107c41;
  font-size: 16.5px;
  font-weight: 600;
  letter-spacing: 0;
  white-space: nowrap;
`;

const HScroll = styled.div`
  flex: none;
  display: flex;
  align-items: center;
  justify-content: space-between;
  width: 250px;
  height: 20px;
  margin: 8px 25px 0 19px;
  padding: 0 4px 0 5px;
  border-radius: 10px;
  background: #f5f5f5;
`;

const HThumb = styled.i`
  width: 200px;
  height: 11px;
  margin-right: 9px;
  border-radius: 6px;
  background: #707070;
`;

const TabStrip = () => (
  <SheetTabs>
    <Slot $ml={31} $w={8} $h={37}><svg width="7" height="12" fill="none" stroke="#999" strokeWidth="1.500"><path d="M6 .5.8 6 6 11.500" /></svg></Slot>
    <Slot $ml={33} $w={8} $h={37}><svg width="7" height="12" fill="none" stroke="#999" strokeWidth="1.500"><path d="M1 .5 6.200 6 1 11.500" /></svg></Slot>
    <SheetTab $ml={72} $w={83}>Lead sheet</SheetTab>
    <Sep $mt={7} $ml={16} $h={24} />
    <SheetTab $ml={16} $w={104}>Control sheet</SheetTab>
    <Sep $mt={7} $ml={17} $h={24} />
    <SheetTab $ml={16} $w={80}>Disclosure</SheetTab>
    <Sep $mt={7} $ml={15} $h={24} />
    <ActiveTab><ActiveLabel>Expense Vouching</ActiveLabel></ActiveTab>
    <Sep $mt={7} $ml={5} $h={24} />
    <SheetTab $ml={16} $w={112}>Nature Noting</SheetTab>
    <Sep $mt={7} $ml={17} $h={24} />
    <Slot $ml={51} $w={16} $h={37}><svg width="15" height="15" stroke="#333" strokeWidth="1.500"><path d="M7.500 0v15M0 7.500h15" /></svg></Slot>
    <Slot $h={38} $push><svg width="3" height="13" fill="#444"><path d="M0 0h3v3H0zM0 5h3v3H0zM0 10h3v3H0z" /></svg></Slot>
    <HScroll>
      <svg width="9" height="11"><path d="M9 0v11L0 5.500z" fill="#707070" /></svg>
      <HThumb />
      <svg width="9" height="11"><path d="M0 0v11l9-5.500z" fill="#707070" /></svg>
    </HScroll>
  </SheetTabs>
);

/* ---------- status bar ---------- */

const StatusBar = styled.div`
  flex: none;
  display: flex;
  align-items: center;
  height: 26px;
  padding-left: 14px;
  background: #f4f4f4;
`;

const ViewButton = styled.div<{ $on?: boolean; $push?: boolean }>`
  flex: none;
  display: flex;
  align-items: center;
  justify-content: center;
  width: 50px;
  height: 26px;
  margin-left: ${(p) => (p.$push ? "auto" : 0)};
  background: ${(p) => (p.$on ? "#dedede" : "transparent")};
`;

const Zoom = styled.div`
  flex: none;
  display: flex;
  align-items: center;
  justify-content: center;
  width: 124px;
  height: 14px;
  margin-left: 7px;
  background: linear-gradient(#666, #666) center / 100% 1px no-repeat;
`;

const ZoomKnob = styled.i`
  width: 6px;
  height: 14px;
  margin-left: 2px;
  background: #666;
`;

const Status = () => (
  <StatusBar>
    <Text $w={60} $size={12.500} $ls={-0.100}>Ready</Text>
    <svg width="19" height="19" viewBox="0 0 19 19" fill="none" stroke="#333" strokeWidth="1.200"><circle cx="8" cy="3" r="2" /><path d="M1 4.500c2 2 4 2.500 4.500 3V11l-2.500 6 1.500.6L8 12l1.500 2M15 4.500c-2 2-4 2.500-4.500 3v2.500M11 11l7 7M18 11l-7 7" /></svg>
    <Text $ml={4} $size={12.500} $ls={-0.06} $bold>Accessibility: Investigate</Text>
    <ViewButton $push>
      <svg width="17" height="17" viewBox="0 0 17 17" fill="none" stroke="#444" strokeWidth="1.200"><path d="M.7.700h15.600v15.600H.7zM5.800.7v15.600M11.200.7v15.600M.7 5.800h15.600M.7 11.200h15.600" /></svg>
    </ViewButton>
    <ViewButton>
      <svg width="18" height="17" viewBox="0 0 18 17" fill="none" stroke="#444" strokeWidth="1.200"><path d="M.7.700h16.600v15.600H.7zM4 3.500h10v10H4zM6 6h6M6 8.500h6M6 11h6" /></svg>
    </ViewButton>
    <ViewButton $on>
      <svg width="18" height="17" viewBox="0 0 18 17" fill="none" stroke="#444" strokeWidth="1.300"><path d="M.7.700h16.600v15.600H.7zM5.500.7v9.500M11.500.7v9.500H.7" /></svg>
    </ViewButton>
    <Slot $ml={6} $w={10}><svg width="10" height="2"><path d="M0 1h10" stroke="#444" strokeWidth="1.400" /></svg></Slot>
    <Zoom><ZoomKnob /></Zoom>
    <Slot $ml={6} $w={11}><svg width="10" height="10" stroke="#444" strokeWidth="1.400"><path d="M5 0v10M0 5h10" /></svg></Slot>
    <Text $ml={16} $w={42} $size={12.500} $ls={-0.3}>100%</Text>
  </StatusBar>
);

/* ---------- taskbar ---------- */

const TaskBar = styled.footer`
  flex: none;
  display: flex;
  align-items: center;
  height: 60px;
  border-top: 1px solid #444;
  background: #1c1c1c;
  color: #fff;
`;

const TwoLines = styled.div<{ $w: number; $ml: number; $right?: boolean }>`
  flex: none;
  width: ${(p) => p.$w}px;
  margin-left: ${(p) => p.$ml}px;
  padding-bottom: 1px;
  font-size: 14.5px;
  line-height: 20px;
  letter-spacing: ${(p) => (p.$right ? -0.2 : -0.3)}px;
  text-align: ${(p) => (p.$right ? "right" : "left")};
  white-space: nowrap;
`;

const Muted = styled.div`
  color: #bdbdbd;
  font-size: 14.5px;
  letter-spacing: 0;
`;

const TaskSearch = styled.div`
  flex: none;
  display: flex;
  align-items: center;
  width: 275px;
  height: 40px;
  margin: 0 2px 0 17px;
  padding-left: 14px;
  border: 1px solid #555;
  border-radius: 20px;
  background: #3a3a3a;
  color: #ddd;
`;

const AppSlot = styled.div<{ $active?: boolean; $mark?: string }>`
  position: relative;
  flex: none;
  display: flex;
  align-items: center;
  justify-content: center;
  width: 51px;
  height: 50px;
  margin: 0 2px;
  border-radius: 5px;
  ${(p) =>
    p.$active &&
    css`
      background: #2b2b2b;
      box-shadow: inset 0 0 0 1px #353535;
    `}
  &::after {
    content: "";
    position: absolute;
    bottom: 1px;
    width: ${(p) => (p.$active ? 20 : 8)}px;
    height: 4px;
    border-radius: 2px;
    background: ${(p) => p.$mark ?? "transparent"};
  }
`;

const Chrome = () => (
  <>
    <path d="M2 7.500A15 15 0 0 1 28 7.500H15a7.500 7.500 0 0 0-6.500 11.200z" fill="#e33b2e" />
    <path d="M28 7.500A15 15 0 0 1 15 30l6.500-11.200A7.500 7.500 0 0 0 15 7.500z" fill="#fbc116" />
    <path d="M15 30A15 15 0 0 1 2 7.500l6.500 11.300a7.500 7.500 0 0 0 13 0z" fill="#279847" />
    <circle cx="15" cy="15" r="7.500" fill="#fff" />
    <circle cx="15" cy="15" r="5.800" fill="#2f7de8" />
  </>
);

const OfficeTile = ({ letter, shades, badge }: { letter: string; shades: string[]; badge: string }) => (
  <svg width="30" height="28" viewBox="0 0 30 28">
    {shades.map((c, i) => (
      <path key={c} d={`M7 ${i * 7}h22v7H7z`} fill={c} />
    ))}
    <rect x="0" y="6" width="15" height="16" rx="1.500" fill={badge} />
    <text x="7.500" y="18" textAnchor="middle" fontFamily="Open Sans" fontWeight="700" fontSize="11.500" fill="#fff">{letter}</text>
  </svg>
);

const BadgedIcon = styled.div`
  display: flex;
  margin: -6px -6px 0 0;
`;

const Apps = () => (
  <>
    <AppSlot>
      <svg width="30" height="30" viewBox="0 0 30 30">
        <defs>
          <linearGradient id="cpA" x1="0" y1="0" x2="0" y2="1"><stop offset="0" stopColor="#1a90e8" /><stop offset=".55" stopColor="#3cc08c" /><stop offset="1" stopColor="#f0c419" /></linearGradient>
          <linearGradient id="cpB" x1="0" y1="0" x2="0" y2="1"><stop offset="0" stopColor="#c458e0" /><stop offset="1" stopColor="#f7785a" /></linearGradient>
        </defs>
        <path d="M8 1h12c2 0 2.500 1.500 3 3.500L24 7h-5c-2 0-3 1-3.500 3L13 18c-.5 2-1.500 2.500-3.500 2.500H4c-3 0-4-2-3-5L5 4c.6-2 1.500-3 3-3z" fill="url(#cpA)" />
        <path d="M15 1h5c2 0 2.500 1.500 3 3.500L24 7h-5c-2-3-2-5-4-6z" fill="#1b44c8" />
        <path d="M19 7.500h6c3 0 4.500 2 3.700 5L26 21H14l3.500-11c.3-1.500.7-2.500 1.500-2.500z" fill="url(#cpB)" />
        <rect x="7" y="20" width="23" height="9.500" rx="2" fill="#fdc70c" />
        <text x="18.500" y="27.800" textAnchor="middle" fontFamily="Open Sans" fontWeight="800" fontSize="8.500" fill="#1c1c1c">PRE</text>
      </svg>
    </AppSlot>
    <AppSlot>
      <svg width="31" height="29" viewBox="0 0 31 29"><path d="M0 9h23v20H0z" fill="#5e5e5e" /><path d="M8 1h23v20H8z" fill="#ededed" /><path d="M8 9h15v12H8z" fill="#a6a6a6" /></svg>
    </AppSlot>
    <AppSlot><svg width="30" height="30" viewBox="0 0 30 30"><Chrome /></svg></AppSlot>
    <AppSlot>
      <svg width="28" height="26" viewBox="0 0 28 26"><circle cx="15.500" cy="4.500" r="4" fill="#7b83eb" /><circle cx="23.500" cy="5.500" r="2.800" fill="#5059c9" /><path d="M18 9.500h9v6.500a5 5 0 0 1-8 4z" fill="#5059c9" /><path d="M9 9.500h11v8a6 6 0 0 1-11 5z" fill="#7b83eb" /><path d="M1 6h14v14H1z" fill="#fff" /><text x="8" y="17.300" textAnchor="middle" fontFamily="Open Sans" fontWeight="700" fontSize="12" fill="#5059c9">T</text></svg>
    </AppSlot>
    <AppSlot $mark="#9a9a9a">
      <svg width="30" height="28" viewBox="0 0 30 28"><path d="M0 3a2 2 0 0 1 2-2h8l3 3h15a2 2 0 0 1 2 2v3H0z" fill="#e3a008" /><path d="M0 6h11l3-2h16v23H0z" fill="#fdcf47" /><path d="M5 22a2.500 2.500 0 0 1 2.500-2.500h15A2.500 2.500 0 0 1 25 22v5H5z" fill="#1277c8" /><path d="M9 23.500h12" stroke="#0a4f94" strokeWidth="2" /></svg>
    </AppSlot>
    <AppSlot>
      <svg width="27" height="29" viewBox="0 0 27 29">
        <defs>
          <linearGradient id="mA" x1="0" y1="0" x2="0" y2="1"><stop offset="0" stopColor="#7fb0ee" /><stop offset="1" stopColor="#a98ae0" /></linearGradient>
          <linearGradient id="mB" x1="0" y1="0" x2="1" y2="1"><stop offset="0" stopColor="#2f56b8" /><stop offset="1" stopColor="#55d0fa" /></linearGradient>
          <linearGradient id="mC" x1="0" y1="0" x2="1" y2="0"><stop offset="0" stopColor="#c9a2f2" /><stop offset="1" stopColor="#6b4cc0" /></linearGradient>
        </defs>
        <path d="M13.500 0 3 6C1 7.200.5 8.500.5 10.500v9L9 18v-7l6-4z" fill="url(#mA)" />
        <path d="M13.500 0 24.500 6.500C26 7.500 26.500 8.500 26.500 10v9.500L18 18v-7l-5-4z" fill="url(#mB)" />
        <path d="M.5 19.500 9 17l4.500 3.500L18 17.500l8.500 2c0 1.500-.5 2.500-2 3.500L16 28c-1.500 1-3.500 1-5 0L3 23.500C1.500 22.500.5 21.500.5 19.500z" fill="url(#mC)" />
        <path d="M13.500 8.800l5 2.900v5.800l-5 2.900-5-2.900v-5.800z" fill="#1c1c1c" />
      </svg>
    </AppSlot>
    <AppSlot>
      <svg width="30" height="30" viewBox="0 0 30 30"><path d="M8.500 7V2h13v5" fill="none" stroke="#25b3ea" strokeWidth="2" /><path d="M.5 5h29v20a4 4 0 0 1-4 4h-21a4 4 0 0 1-4-4z" fill="#efefef" /><path d="M9.500 11.500H15V17H9.500z" fill="#f25022" /><path d="M15.500 11.500H21V17h-5.500z" fill="#7fba00" /><path d="M9.500 17.500H15V23H9.500z" fill="#00a4ef" /><path d="M15.500 17.500H21V23h-5.500z" fill="#ffb900" /></svg>
    </AppSlot>
    <AppSlot>
      <svg width="30" height="28" viewBox="0 0 30 28"><path d="M0 9 15 0l15 9v8H0z" fill="#0c5ba5" /><path d="M3 9.500h24V16l-12 5L3 16z" fill="#f3f3f3" /><path d="M0 9.500 15 18 30 9.500V28H0z" fill="#35c3f3" /><path d="M0 9.500 30 28H0z" fill="#1b93dc" /></svg>
    </AppSlot>
    <AppSlot>
      <svg width="30" height="30" viewBox="0 0 30 30"><path d="M0 0h30v30H0z" fill="#000" /><path d="M9.500 5H13v19l-3.500.5zM17 5h3.500v19.500L17 24z" fill="#b1060f" /><path d="M9.500 5H13l7.500 19.500L17 24z" fill="#e50914" /></svg>
    </AppSlot>
    <AppSlot>
      <svg width="31" height="29" viewBox="0 0 31 29"><path d="M9.500 1.500C9 1 8.500 1 8 1.800L1.500 13c-.5 1-.5 2 0 3L8 27c.5.700 1 .8 1.800.3L29.500 15.500c.8-.5.8-1.300 0-1.800z" fill="#5be58a" stroke="#fff" strokeWidth="2" strokeLinejoin="round" /><path d="M19 8.500 29 14.500 19 20.500c-2.500-4-2.500-8 0-12z" fill="#14274e" stroke="#fff" strokeWidth="1" /></svg>
    </AppSlot>
    <AppSlot>
      <svg width="29" height="22" viewBox="0 0 29 22"><path d="M.5 3v17a2 2 0 0 0 2 2H7V8z" fill="#4286f5" /><path d="M22 8v14h4.500a2 2 0 0 0 2-2V3z" fill="#34a853" /><path d="M22 1.500V10l6.500-5V3c0-3-3-3.500-5-2z" fill="#fbbc05" /><path d="M7 1.500V10L.5 5V3c0-3 3-3.500 5-2z" fill="#c5221f" /><path d="M7 2l7.500 6L22 2v8l-7.500 6L7 10z" fill="#ea4335" /></svg>
    </AppSlot>
    <AppSlot $mark="#9a9a9a"><OfficeTile letter="W" badge="#185abd" shades={["#41a5ee", "#2b7cd3", "#1a5fc4", "#103f91"]} /></AppSlot>
    <AppSlot $mark="#9a9a9a">
      <BadgedIcon>
        <svg width="36" height="36" viewBox="0 0 36 36"><g transform="translate(0 6)"><Chrome /></g><circle cx="26" cy="10" r="10" fill="#c2185b" /><text x="26" y="14" textAnchor="middle" fontFamily="Open Sans" fontSize="11" fill="#f5c3d5">G</text></svg>
      </BadgedIcon>
    </AppSlot>
    <AppSlot $active $mark="#4cc2ff"><OfficeTile letter="X" badge="#107c41" shades={["#33c481", "#21a366", "#14804a", "#185c37"]} /></AppSlot>
  </>
);

const Taskbar = () => (
  <TaskBar>
    <Slot $ml={24} $w={30}>
      <svg width="30" height="30" viewBox="0 0 30 30"><path d="M18 3c10 3 13 14 6 20-5 5-15 5-20-1 12 2 18-8 14-19z" fill="#f5a524" /><path d="M4 13a4.500 4.500 0 0 1 .5-8.500 5 5 0 0 1 9.500 0A4.300 4.300 0 0 1 14 13z" fill="#c3d6f3" /></svg>
    </Slot>
    <TwoLines $ml={10} $w={70}>
      20°C
      <Muted>صافٍ غالبًا</Muted>
    </TwoLines>
    <Slot $ml={286} $w={29}>
      <svg width="29" height="29" viewBox="0 0 29 29"><defs><linearGradient id="win" x1="0" y1="0" x2="1" y2="1"><stop offset="0" stopColor="#6ee3fb" /><stop offset="1" stopColor="#0a8ff0" /></linearGradient></defs><path d="M0 0h14v14H0zM15 0h14v14H15zM0 15h14v14H0zM15 15h14v14H15z" fill="url(#win)" /></svg>
    </Slot>
    <TaskSearch>
      <svg width="19" height="19" viewBox="0 0 19 19" fill="none" stroke="#eee" strokeWidth="1.800"><circle cx="8" cy="8" r="6.500" /><path d="M12.800 12.800l5 5" /></svg>
      <Text $ml={12} $size={16.500} $ls={-0.1}>Search</Text>
    </TaskSearch>
    <Apps />
    <Slot $ml={52} $w={12}><Chevron size={12} up color="#fff" weight={1.600} /></Slot>
    <Slot $ml={25} $w={21}>
      <svg width="21" height="22" viewBox="0 0 21 22" fill="none" stroke="#eee" strokeWidth="1.400"><path d="M2 9C3 4 6 1.500 10 1.500c3.500 0 6 1.500 7.500 4.500M18.500 1v5.500H13M9 20c-3.500-.3-6-2-7.500-5M1.200 20.500V15h5.500" /><circle cx="16" cy="16.500" r="5" fill="#ff9d0a" stroke="none" /></svg>
    </Slot>
    <Text $ml={22} $w={30} $size={14.5} $ls={-0.3}>ENG</Text>
    <Slot $ml={22} $w={20}>
      <svg width="20" height="16" viewBox="0 0 20 16" fill="none" stroke="#fff" strokeWidth="1.500"><path d="M1 6.500a12.500 12.500 0 0 1 18 0M3.700 9.300a8.500 8.500 0 0 1 12.600 0M6.500 12a5 5 0 0 1 7 0" /><circle cx="10" cy="14" r="1" fill="#fff" /></svg>
    </Slot>
    <Slot $ml={10} $w={20}>
      <svg width="20" height="16" viewBox="0 0 20 16" fill="none" stroke="#fff" strokeWidth="1.300"><path d="M1 5.500h3L9 1.500v13L4 10.500H1zM13 5.500l5.500 5.500M18.500 5.500 13 11" /></svg>
    </Slot>
    <Slot $ml={9} $w={21}>
      <svg width="21" height="18" viewBox="0 0 21 18" fill="none" stroke="#fff" strokeWidth="1.400"><path d="M8 4h9.500v11.500H4V13M17.500 7.500H20V12h-2.500" /><path d="M5.500.5C2 3 .5 6 1.500 10.500l2 3C7 10 8 6 5.500.5z" fill="#fff" /></svg>
    </Slot>
    <TwoLines $ml={6} $w={82} $right>10:59 PM<br />2/14/2024</TwoLines>
    <Slot $ml={10} $w={18}>
      <svg width="17" height="19" viewBox="0 0 17 19" fill="#8fe3ff"><path d="M8.500.5a6 6 0 0 1 6 6v5l1.800 3.500H.7L2.500 11.500v-5a6 6 0 0 1 6-6zM6 16h5a2.500 2.500 0 0 1-5 0z" /></svg>
    </Slot>
  </TaskBar>
);

/* ---------- activation notice over the desktop ---------- */

const Notice = styled.div`
  position: absolute;
  left: 1554px;
  top: 914px;
  color: rgba(140, 140, 140, 0.6);
  white-space: nowrap;
  pointer-events: none;
`;

const NoticeTitle = styled.div`
  font-size: 24px;
  line-height: 34px;
  letter-spacing: 0;
`;

const NoticeText = styled.div`
  font-size: 17px;
  line-height: 26px;
  letter-spacing: 0.15px;
`;

export default function App() {
  return (
    <Screen>
      <Global />
      <TitleArea />
      <Tabs />
      <Ribbon />
      <FormulaBar />
      <Workspace>
        <Worksheet />
        <VScroll>
          <svg width="11" height="9"><path d="M5.500 0 11 9H0z" fill="#707070" /></svg>
          <VThumb />
          <svg width="11" height="9"><path d="M0 0h11L5.500 9z" fill="#707070" /></svg>
        </VScroll>
      </Workspace>
      <TabStrip />
      <Status />
      <Taskbar />
      <Notice>
        <NoticeTitle>Activate Windows</NoticeTitle>
        <NoticeText>Go to Settings to activate Windows.</NoticeText>
      </Notice>
    </Screen>
  );
}
